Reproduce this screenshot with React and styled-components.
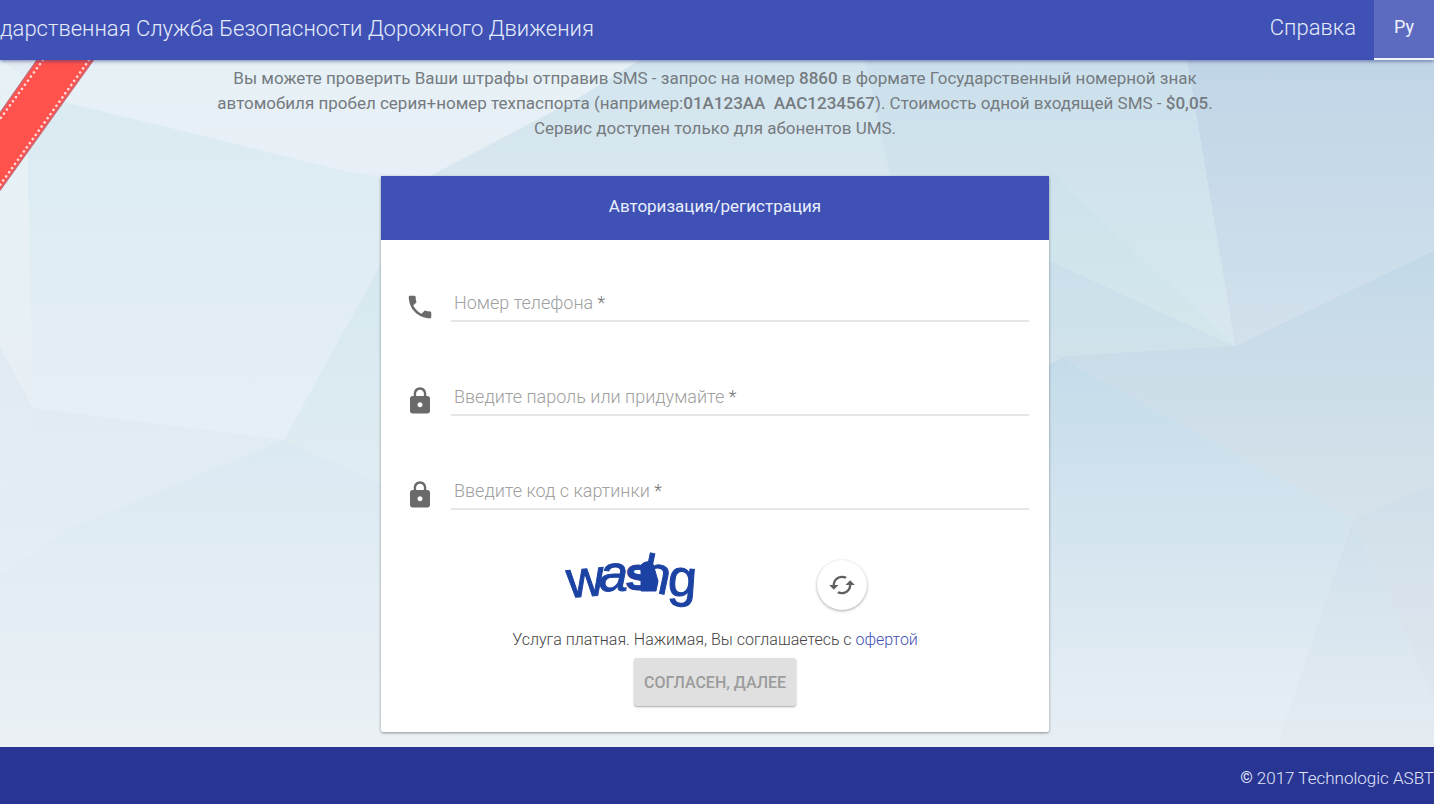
import React, { useState } from "react";
import { MdCached, MdLock, MdPhone } from "react-icons/md";
import styled, { createGlobalStyle } from "styled-components";

const GlobalStyle = createGlobalStyle`
  * {
    box-sizing: border-box;
  }

  body {
    margin: 0;
    font-family: Roboto, "Liberation Sans", sans-serif;
    font-size: 17px;
    color: #757b80;
  }
`;

const Page = styled.div`
  min-height: 100vh;
  display: flex;
  flex-direction: column;
  overflow-x: hidden;
`;

const Header = styled.header`
  height: 60px;
  display: flex;
  justify-content: space-between;
  background-color: #3f51b5;
  color: #e4ebfb;
  box-shadow: 0 1px 4px rgba(30, 40, 110, 0.6);
  position: relative;
  z-index: 1;
`;

const Brand = styled.div`
  display: flex;
  align-items: center;
  padding-bottom: 4px;
  white-space: nowrap;
  font-size: 22px;
  font-weight: 300;
`;

const Nav = styled.nav`
  display: flex;
`;

const NavLink = styled.a`
  display: flex;
  align-items: center;
  padding: 0 18px 6px;
  color: inherit;
  font-size: 22px;
  font-weight: 300;
  text-decoration: none;
`;

const LangButton = styled.button`
  width: 60px;
  border: 0;
  border-bottom: 2px solid #f3f5fc;
  padding: 0 0 6px;
  background-color: #5c6bc0;
  color: #eef2ff;
  font-family: inherit;
  font-size: 18px;
  cursor: pointer;
`;

const Main = styled.main`
  flex: 1;
  position: relative;
  padding: 6px 20px 15px 16px;
  background-color: #e4edf4;
`;

const Backdrop = styled.svg`
  position: absolute;
  inset: 0;
  width: 100%;
  height: 100%;
`;

const Ribbon = styled.svg`
  position: absolute;
  top: 0;
  left: 0;
`;

const Content = styled.div`
  position: relative;
  display: flex;
  flex-direction: column;
  align-items: center;
`;

const Notice = styled.p`
  margin: 0 0 35px;
  line-height: 25px;
  text-align: center;

  b {
    font-weight: 500;
  }
`;

const Card = styled.form`
  width: 100%;
  max-width: 668px;
  border-radius: 2px;
  background-color: #fff;
  box-shadow: 0 1px 3px rgba(0, 0, 0, 0.4);
`;

const CardTitle = styled.h1`
  margin: 0;
  height: 64px;
  display: flex;
  justify-content: center;
  align-items: center;
  padding-bottom: 4px;
  background-color: #3f51b5;
  color: #e8eefc;
  font-size: 17px;
  font-weight: 400;
`;

const Fields = styled.div`
  display: flex;
  flex-direction: column;
  gap: 58px;
  padding: 46px 20px 0 24px;
`;

const Field = styled.div`
  display: flex;
  align-items: flex-end;
  gap: 16px;
  height: 36px;

  > svg {
    flex: none;
    color: #6a6a6a;
  }
`;

const Control = styled.div`
  flex: 1;
  height: 36px;
  display: grid;
  border-bottom: 2px solid #e6e6e6;

  > * {
    grid-area: 1 / 1;
  }
`;

const Label = styled.label`
  padding: 6px 3px 0;
  color: #a0a0a0;
  font-size: 18px;
  font-weight: 300;
  line-height: 22px;
  visibility: ${(p) => (p.$hidden ? "hidden" : "visible")};

  span {
    color: #777;
  }
`;

const Input = styled.input`
  width: 100%;
  border: 0;
  outline: 0;
  padding: 0 3px;
  background: transparent;
  color: #444;
  font-family: inherit;
  font-size: 18px;
`;

const CaptchaRow = styled.div`
  display: flex;
  justify-content: center;
  align-items: center;
  gap: 116px;
  height: 76px;
  margin-top: 34px;
  padding-left: 2px;
`;

const RefreshButton = styled.button`
  width: 50px;
  height: 50px;
  display: flex;
  justify-content: center;
  align-items: center;
  margin-top: 6px;
  border: 0;
  border-radius: 50%;
  padding: 0;
  background-color: #fff;
  color: #606060;
  box-shadow: 0 1px 3px rgba(0, 0, 0, 0.35);
  cursor: pointer;
`;

const Terms = styled.p`
  margin: 10px 0 8px;
  color: #444;
  font-size: 16px;
  font-weight: 300;
  line-height: 20px;
  text-align: center;

  a {
    color: #3f51b5;
    text-decoration: none;
  }
`;

const Actions = styled.div`
  display: flex;
  justify-content: center;
  padding-bottom: 26px;
`;

const SubmitButton = styled.button`
  height: 48px;
  border: 0;
  border-radius: 3px;
  padding: 0 10px;
  background-color: #e0e0e0;
  color: #9c9c9c;
  box-shadow: 0 1px 2px rgba(0, 0, 0, 0.35);
  font-family: inherit;
  font-size: 16px;
  font-weight: 500;
  text-transform: uppercase;
`;

const Footer = styled.footer`
  height: 57px;
  display: flex;
  justify-content: flex-end;
  align-items: center;
  gap: 4px;
  padding-top: 4px;
  background-color: #283593;
  color: #e0e5fa;
  font-size: 17px;
  font-weight: 300;
  white-space: nowrap;

  b {
    font-size: 16px;
    font-weight: 500;
  }
`;

// [points, top colour, bottom colour]
const facets = [
  ["0,0 65,42 30,70 33,348 0,287", "#e6f2f6", "#e7eff5"],
  ["65,42 350,112 382,118 382,202 284,380 33,348 27,70", "#dbebf2", "#e6eff5"],
  ["30,0 640,0 575,40 430,116 350,112 65,42", "#e6f1f6", "#e8eff6"],
  ["0,287 33,348 20,410 0,440", "#e0eaf2", "#e3edf3"],
  ["33,348 284,380 70,468 0,515 0,440 20,410", "#e0ebf2", "#e5edf5"],
  ["284,380 382,202 382,428", "#d6e8ef", "#e0edf2"],
  ["284,380 450,455 450,687 0,687 0,515 70,468", "#dbe9f2", "#ebf1f5"],
  ["450,660 1040,660 1040,687 450,687", "#e9f1f5", "#ebf1f5"],
  ["640,0 900,0 900,116 430,116 575,40", "#d2e5ef", "#d8e7ef"],
  ["865,0 1187,0 1235,286 890,116", "#cbe0ec", "#d9e8ef"],
  ["1049,110 1235,286 1049,200", "#cde2ec", "#d4e7ec"],
  ["1049,200 1235,286 1049,307", "#cae0eb", "#d1e3eb"],
  ["1187,0 1434,0 1434,190 1235,286", "#c0d5e7", "#d2e1ec"],
  ["1049,297 1235,286 1434,190 1434,423 1353,458 1062,298", "#c3d9e8", "#d6e2ea"],
  ["1040,310 1062,298 1353,458 1277,687 1040,687", "#c4dcea", "#e8eff5"],
  ["1353,458 1434,423 1434,640", "#d0dfea", "#dfe6ee"],
  ["1353,458 1434,640 1434,687 1277,687", "#cfe0ec", "#e5ecf2"],
];

const Background = () => (
  <Backdrop viewBox="0 0 1434 687" preserveAspectRatio="none" aria-hidden="true">
    <defs>
      {facets.map(([, from, to], i) => (
        <linearGradient key={i} id={`facet${i}`} x1="0" y1="0" x2="0" y2="1">
          <stop offset="0" stopColor={from} />
          <stop offset="1" stopColor={to} />
        </linearGradient>
      ))}
    </defs>
    {facets.map(([points], i) => (
      <polygon key={i} points={points} fill={`url(#facet${i})`} />
    ))}
  </Backdrop>
);

const CornerRibbon = () => (
  <Ribbon width="96" height="132" viewBox="0 0 96 132" aria-hidden="true">
    <polygon points="37,0 94,0 0,131 0,53" fill="#ff524d" />
    <path d="M37 0 0 53M93 0 0 130" stroke="#c96a78" strokeWidth="1.4" />
    <path
      d="M43 0 0 59M89 0 0 125"
      stroke="#ffd9dc"
      strokeWidth="2.6"
      strokeLinecap="round"
      strokeDasharray="0.1 5"
    />
  </Ribbon>
);

const Captcha = () => (
  <svg width="136" height="72" viewBox="0 0 136 72" role="img" aria-label="Код">
    <g
      fill="#1c43a3"
      stroke="#1c43a3"
      strokeWidth="1"
      fontFamily="Liberation Sans, sans-serif"
    >
      <text x="3" y="52" fontSize="52" transform="rotate(-5 3 52)">w</text>
      <text x="34" y="45" fontSize="52" fontStyle="italic">a</text>
      <text x="60" y="44" fontSize="46" fontWeight="bold">s</text>
      <text x="74" y="43" fontSize="52" transform="rotate(12 74 43)">h</text>
      <text x="102" y="49" fontSize="52" transform="rotate(4 102 49)">g</text>
      <path d="M76 19q6-6 12-1l5 17-2 10H76z" />
    </g>
  </svg>
);

const fields = [
  { id: "phone", label: "Номер телефона", type: "tel", Icon: MdPhone },
  { id: "password", label: "Введите пароль или придумайте", type: "password", Icon: MdLock },
  { id: "code", label: "Введите код с картинки", type: "text", Icon: MdLock },
];

const App = () => {
  const [values, setValues] = useState({});

  return (
    <Page>
      <GlobalStyle />
      <Header>
        <Brand>дарственная Служба Безопасности Дорожного Движения</Brand>
        <Nav>
          <NavLink href="#help">Справка</NavLink>
          <LangButton type="button">Ру</LangButton>
        </Nav>
      </Header>
      <Main>
        <Background />
        <CornerRibbon />
        <Content>
          <Notice>
            Вы можете проверить Ваши штрафы отправив SMS - запрос на номер <b>8860</b> в
            формате Государственный номерной знак
            <br />
            автомобиля пробел серия+номер техпаспорта (например:
            <b>01A123AA&nbsp; AAC1234567</b>). Стоимость одной входящей SMS - <b>$0,05</b>.
            <br />
            Сервис доступен только для абонентов UMS.
          </Notice>
          <Card onSubmit={(e) => e.preventDefault()}>
            <CardTitle>Авторизация/регистрация</CardTitle>
            <Fields>
              {fields.map(({ id, label, type, Icon }) => (
                <Field key={id}>
                  <Icon size={30} />
                  <Control>
                    <Label htmlFor={id} $hidden={Boolean(values[id])}>
                      {label} <span>*</span>
                    </Label>
                    <Input
                      id={id}
                      type={type}
                      value={values[id] || ""}
                      onChange={(e) => setValues({ ...values, [id]: e.target.value })}
                    />
                  </Control>
                </Field>
              ))}
            </Fields>
            <CaptchaRow>
              <Captcha />
              <RefreshButton type="button" aria-label="Обновить код">
                <MdCached size={28} />
              </RefreshButton>
            </CaptchaRow>
            <Terms>
              Услуга платная. Нажимая, Вы соглашаетесь с <a href="#offer">офертой</a>
            </Terms>
            <Actions>
              <SubmitButton disabled>Согласен, далее</SubmitButton>
            </Actions>
          </Card>
        </Content>
      </Main>
      <Footer>
        <b>©</b> 2017 Technologic ASBT
      </Footer>
    </Page>
  );
};

export default App;
